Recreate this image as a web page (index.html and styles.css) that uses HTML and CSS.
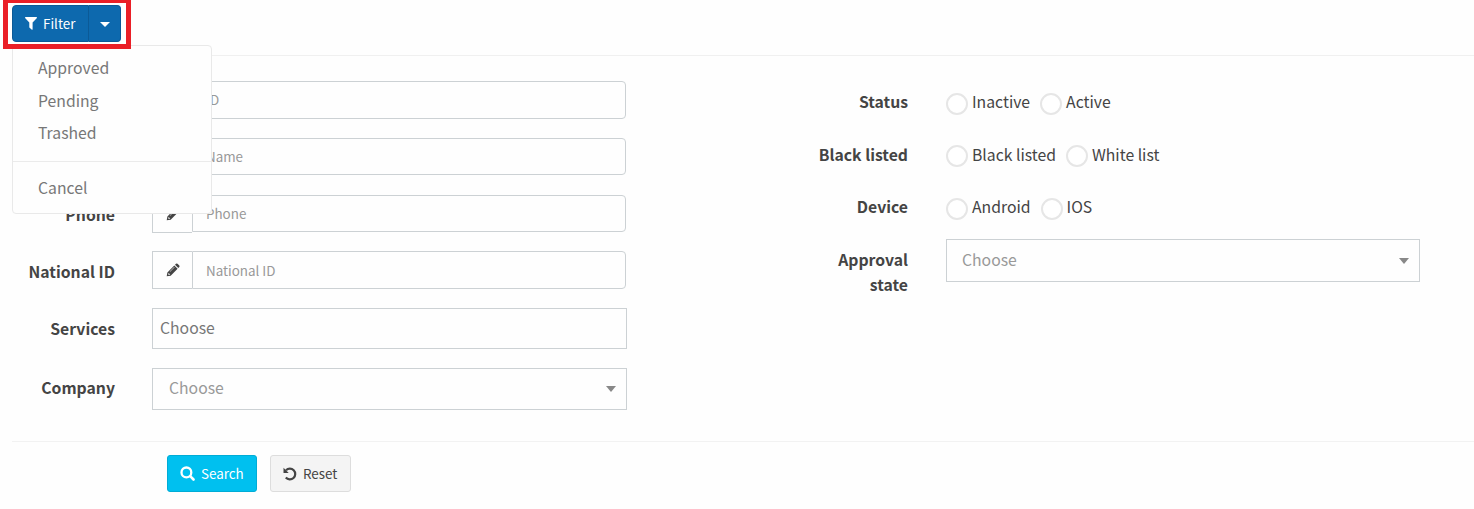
FILE: index.html
```html
<!DOCTYPE html>
<html lang="en">
<head>
<meta charset="utf-8">
<title>Filter</title>
<link rel="stylesheet" href="styles.css">
</head>
<body>
<svg class="defs" width="0" height="0">
  <symbol id="pencil" viewBox="0 0 14 14"><path fill-rule="evenodd" d="M.7 13.3 1.4 9.4 8.3 2.5 11.6 5.8 4.7 12.7ZM2.5 10.2 2.2 11.2 2.9 11.9 3.9 11.6 4.2 10.9 3.2 10.9 3.2 9.9ZM8.2 3.9 3.7 8.4 4.1 8.8 8.6 4.3ZM9 1.8 10 .8Q10.8.1 11.5.8L13.3 2.6Q13.9 3.3 13.3 4.1L12.3 5.1Z"/></symbol>
</svg>
<header class="toolbar">
  <div class="highlight">
    <div class="btn-group">
      <button class="btn btn-filter"><svg class="funnel" width="12" height="13" viewBox="0 0 12 13"><path d="M.5 0h11q.8.5.2 1.2L7.6 5.6v6.6q-.2.9-1 .4L4.6 10.8q-.3-.3-.3-.7V5.6L.3 1.2Q-.3.5.5 0Z"/></svg><span>Filter</span></button>
      <button class="btn btn-caret"><i class="caret"></i></button>
    </div>
  </div>
  <ul class="menu">
    <li>Approved</li>
    <li>Pending</li>
    <li>Trashed</li>
    <li class="divider"></li>
    <li>Cancel</li>
  </ul>
</header>
<main class="form">
  <section class="column left">
    <div class="row"><label class="name">ID</label><div class="group"><span class="addon"><svg width="14" height="14"><use href="#pencil"/></svg></span><span class="input">ID</span></div></div>
    <div class="row short"><label class="name">Name</label><div class="group"><span class="addon"><svg width="14" height="14"><use href="#pencil"/></svg></span><span class="input">Name</span></div></div>
    <div class="row short"><label class="name">Phone</label><div class="group"><span class="addon"><svg width="14" height="14"><use href="#pencil"/></svg></span><span class="input">Phone</span></div></div>
    <div class="row national"><label class="name">National ID</label><div class="group"><span class="addon"><svg width="14" height="14"><use href="#pencil"/></svg></span><span class="input">National ID</span></div></div>
    <div class="row services"><label class="name">Services</label><div class="select multi">Choose</div></div>
    <div class="row company"><label class="name">Company</label><div class="select">Choose<i class="arrow"></i></div></div>
  </section>
  <section class="column right">
    <div class="choice"><label class="name">Status</label><div class="radios"><span class="radio"></span><span>Inactive</span><span class="radio"></span><span>Active</span></div></div>
    <div class="choice"><label class="name">Black listed</label><div class="radios"><span class="radio"></span><span>Black listed</span><span class="radio"></span><span>White list</span></div></div>
    <div class="choice"><label class="name">Device</label><div class="radios"><span class="radio"></span><span>Android</span><span class="radio"></span><span>IOS</span></div></div>
    <div class="choice approval"><label class="name">Approval<br>state</label><div class="select">Choose<i class="arrow"></i></div></div>
  </section>
</main>
<footer class="actions">
  <button class="btn search"><svg width="15" height="15" viewBox="0 0 15 15"><circle cx="6.4" cy="6.4" r="4.9" fill="none" stroke="currentColor" stroke-width="2.3"/><path d="m10.2 10.2 3.3 3.3" stroke="currentColor" stroke-width="2.6" stroke-linecap="round"/></svg><span>Search</span></button>
  <button class="btn reset"><svg width="14" height="14" viewBox="0 0 14 14"><path d="M3 3.2A5.4 5.4 0 1 1 2.8 10.6" fill="none" stroke="currentColor" stroke-width="2.2"/><path d="M.5.7v5.2h5.2Z"/></svg><span>Reset</span></button>
</footer>
</body>
</html>
```

FILE: styles.css
```css
* { box-sizing: border-box; }
body {
  margin: 0;
  height: 509px;
  overflow: hidden;
  background: #fefefe;
  color: #444;
  font: 15.75px/25px "Noto Sans CJK SC", "Noto Sans", sans-serif;
}
.defs { position: absolute; }
svg { fill: currentColor; flex: none; }
.toolbar { position: relative; height: 56px; margin-left: 12px; border-bottom: 1px solid #f0f0f0; }
.highlight {
  position: relative;
  z-index: 3;
  width: 128px;
  height: 49px;
  margin-left: -9px;
  padding: 2px 4px;
  border: 5px solid #ea1f27;
  border-top-width: 3px;
  background: #fff;
}
.btn-group { display: flex; width: 109px; }
.btn {
  display: flex;
  align-items: center;
  height: 37px;
  padding: 0 0 0 12px;
  border: 1px solid;
  border-radius: 3px;
  font: 13.4px/20px "Noto Sans CJK SC", "Noto Sans", sans-serif;
}
.btn span { padding-bottom: 2px; }
.btn-filter { width: 77px; gap: 6px; color: #fff; background: #0d69ae; border-color: #0b5a97; border-radius: 4px 0 0 4px; }
.btn-caret { width: 32px; padding: 2px 0 0; justify-content: center; background: #0d69ae; border-color: #0b5a97; border-left: 0; border-radius: 0 4px 4px 0; }
.caret { border: 5px solid transparent; border-top-color: #fff; border-bottom: 0; }
.menu {
  position: absolute;
  z-index: 2;
  top: 45px;
  left: 0;
  width: 200px;
  height: 169px;
  margin: 0;
  padding: 6px 0 5px;
  list-style: none;
  background: #fefefe;
  border: 1px solid #e9e9e9;
  border-radius: 4px;
  color: #777;
}
.menu li { height: 32.5px; padding-left: 25px; line-height: 32px; }
.menu .divider { height: 1px; margin: 11px 0 10px; background: #ebebeb; }
.form { display: flex; height: 386px; margin-left: 12px; padding-top: 25px; border-bottom: 1px solid #f2f2f2; }
.column { display: flex; flex-direction: column; }
.left { width: 793px; }
.row { display: grid; grid-template-columns: 103px 475px; column-gap: 37px; height: 38px; margin-bottom: 18.8px; align-items: center; }
.name { text-align: right; font-weight: 700; }
.row .name { padding-top: 1px; }
.row.national .name { padding-top: 3px; }
.group { display: flex; width: 474px; height: 38px; }
.addon { display: flex; width: 40px; align-items: center; justify-content: center; border: 1px solid #ccd1d4; border-right: 0; }
.input { flex: 1; padding-left: 13px; border: 1px solid #ccd1d4; border-radius: 0 4px 4px 0; color: #999; font-size: 13.4px; line-height: 35px; }
.short .input { height: 37px; }
.national .input { line-height: 37px; }
.select { position: relative; display: flex; align-items: center; justify-content: space-between; height: 42px; padding: 0 10px 2px 15px; border: 1px solid #ccd1d4; color: #999; }
.multi { height: 41px; padding-left: 7px; color: #777; }
.services { height: 41px; margin-bottom: 19px; }
.services .name { padding: 0 0 1px; }
.company { height: 42px; margin: 0; }
.company .name { padding: 0 0 3px; }
.company .select { padding: 0 10px 3px 16px; }
.arrow { margin-top: 2px; border: 5px solid transparent; border-top: 6px solid #888; border-bottom: 0; }
.choice { display: grid; grid-template-columns: 103px 474px; column-gap: 38px; height: 52.7px; align-items: start; padding-top: 8px; }
.radios { display: flex; height: 25px; align-items: center; }
.radio { width: 22px; height: 22px; margin: 4px 4px 0 0; border: 2px solid #e6e6e6; border-radius: 50%; background: #fff; }
.radio:nth-of-type(3) { margin-left: 10px; }
.approval { padding: 0; }
.approval .name { padding-top: 8px; }
.approval .select { height: 43px; }
.actions { display: flex; gap: 13px; padding: 13px 0 0 167px; }
.search { width: 90px; gap: 6px; padding-left: 12px; color: #fff; background: #00c0ef; border-color: #00acd6; }
.reset { width: 81px; gap: 6px; color: #444; background: #f4f4f4; border-color: #ddd; }
```
